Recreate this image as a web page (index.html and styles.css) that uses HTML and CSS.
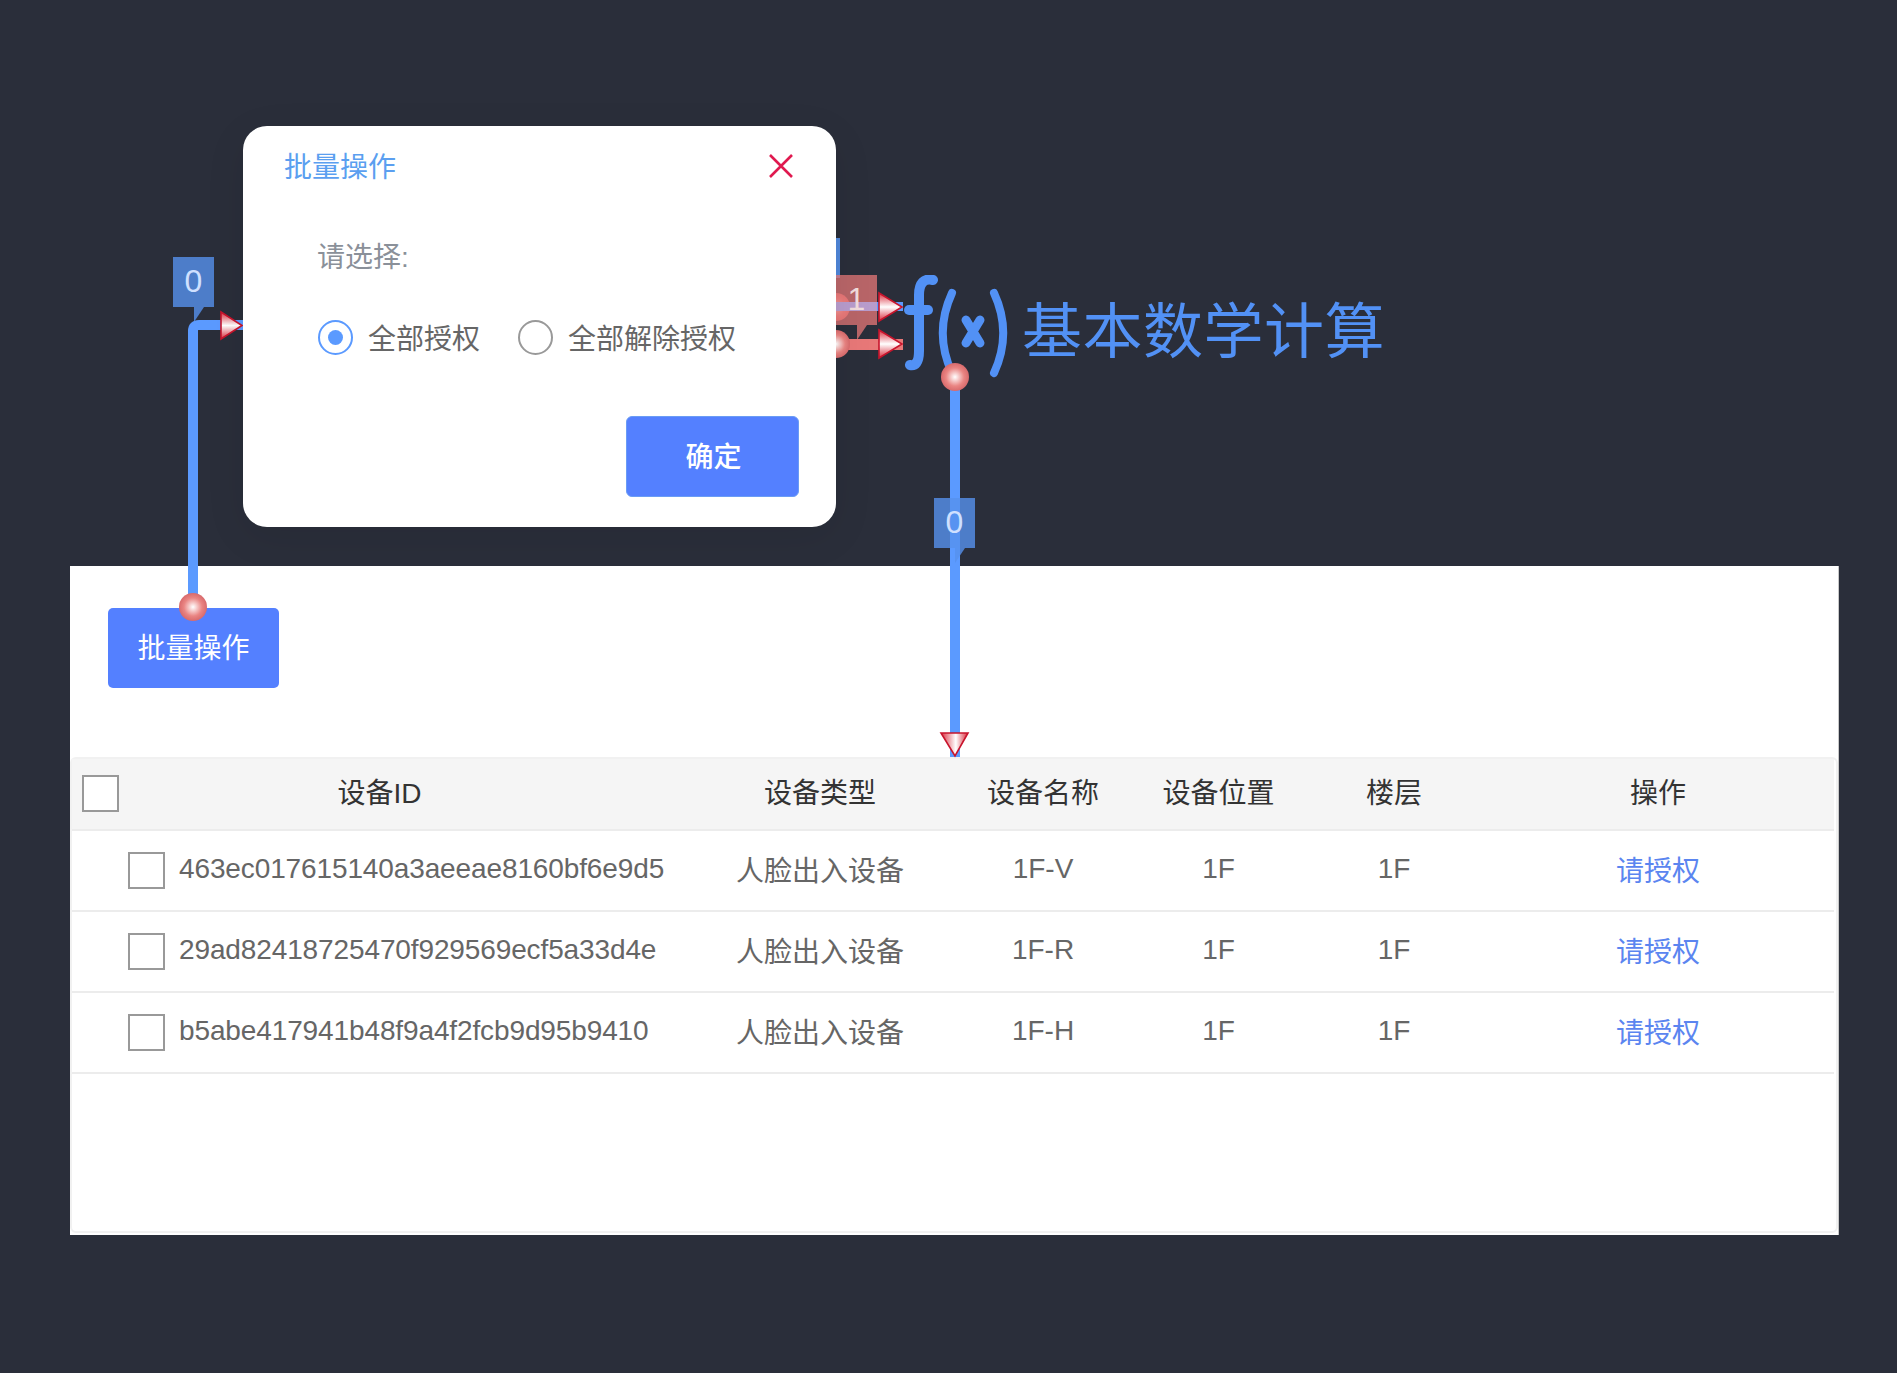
FILE: index.html
```html
<!DOCTYPE html>
<html lang="zh">
<head>
    <meta charset="UTF-8">
    <title>基本数学计算</title>
    <link rel="stylesheet" href="styles.css">
</head>
<body>
    <div class="page">
        <div class="top">
            <section class="dialog">
                <div class="dialog-head">
                    <span class="dialog-title">批量操作</span>
                    <svg class="close" width="28" height="28" viewBox="0 0 28 28"><path d="M3 3 L25 25 M25 3 L3 25" fill="none" stroke="#e0194f" stroke-width="2.6"/></svg>
                </div>
                <p class="dialog-label">请选择:</p>
                <div class="radios">
                    <span class="radio on"></span><span class="radio-text">全部授权</span>
                    <span class="radio"></span><span class="radio-text">全部解除授权</span>
                </div>
                <div class="dialog-foot"><button class="btn btn-ok">确定</button></div>
            </section>
            <div class="heading">
                <svg class="fx" width="112" height="105" viewBox="0 0 112 105">
                    <g fill="none" stroke="#5291f5" stroke-linecap="round">
                        <path d="M33 5 C24 3 19 8 19 20 L19 76 C19 88 15 91 10 90" stroke-width="10"/>
                        <path d="M9 35 L28 35" stroke-width="10"/>
                        <path d="M52 18 C40 44 40 72 52 98" stroke-width="8"/>
                        <path d="M66 45 L80 68 M80 45 L66 68" stroke-width="9"/>
                        <path d="M94 18 C106 44 106 72 94 98" stroke-width="8"/>
                    </g>
                </svg>
                <span class="heading-text">基本数学计算</span>
            </div>
        </div>

        <section class="panel">
            <button class="btn btn-batch">批量操作</button>
            <div class="table">
                <div class="row row-head">
                    <div class="cell cell-id"><span class="check"></span><span class="id-title">设备ID</span></div>
                    <div class="cell">设备类型</div>
                    <div class="cell">设备名称</div>
                    <div class="cell">设备位置</div>
                    <div class="cell">楼层</div>
                    <div class="cell">操作</div>
                </div>
                <div class="row">
                    <div class="cell cell-dev"><span class="check"></span><span>463ec017615140a3aeeae8160bf6e9d5</span></div>
                    <div class="cell">人脸出入设备</div>
                    <div class="cell">1F-V</div>
                    <div class="cell">1F</div>
                    <div class="cell">1F</div>
                    <div class="cell"><a class="link">请授权</a></div>
                </div>
                <div class="row">
                    <div class="cell cell-dev"><span class="check"></span><span>29ad82418725470f929569ecf5a33d4e</span></div>
                    <div class="cell">人脸出入设备</div>
                    <div class="cell">1F-R</div>
                    <div class="cell">1F</div>
                    <div class="cell">1F</div>
                    <div class="cell"><a class="link">请授权</a></div>
                </div>
                <div class="row">
                    <div class="cell cell-dev"><span class="check"></span><span>b5abe417941b48f9a4f2fcb9d95b9410</span></div>
                    <div class="cell">人脸出入设备</div>
                    <div class="cell">1F-H</div>
                    <div class="cell">1F</div>
                    <div class="cell">1F</div>
                    <div class="cell"><a class="link">请授权</a></div>
                </div>
            </div>
        </section>

        <!-- conexiones dibujadas encima de la pagina -->
        <svg class="wires" width="1897" height="1373" viewBox="0 0 1897 1373">
            <defs>
                <radialGradient id="ball">
                    <stop offset="0" stop-color="#ffffff"/>
                    <stop offset=".65" stop-color="#ea8583"/>
                    <stop offset="1" stop-color="#d86a6c"/>
                </radialGradient>
                <linearGradient id="arrowH" x1="0" y1="0" x2="0" y2="1">
                    <stop offset=".08" stop-color="#e04f5c"/>
                    <stop offset=".5" stop-color="#ffffff"/>
                    <stop offset=".92" stop-color="#e04f5c"/>
                </linearGradient>
                <linearGradient id="arrowV" x1="0" y1="0" x2="1" y2="0">
                    <stop offset=".08" stop-color="#e04f5c"/>
                    <stop offset=".55" stop-color="#ffffff"/>
                    <stop offset=".92" stop-color="#e04f5c"/>
                </linearGradient>
            </defs>

            <rect x="836" y="238" width="4" height="40" fill="#4f86d8"/>

            <path d="M193 607 L193 331 Q193 325 199 325 L243 325" fill="none" stroke="#5b9aff" stroke-width="10"/>
            <path d="M955 377 L955 757" fill="none" stroke="#5b9aff" stroke-width="10"/>
            <rect x="836" y="302" width="67" height="9" fill="#5b9aff"/>
            <rect x="836" y="339" width="67" height="11" fill="#e87878"/>

            <circle cx="193" cy="607" r="14" fill="url(#ball)"/>
            <circle cx="955" cy="377" r="14" fill="url(#ball)"/>
            <circle cx="836" cy="307" r="14" fill="url(#ball)"/>
            <circle cx="836" cy="344" r="14" fill="url(#ball)"/>

            <path d="M221 312 L242 325.500 L221 339 Z" fill="url(#arrowH)" stroke="#c8142c" stroke-width="1.6"/>
            <path d="M879 293 L902 307 L879 321 Z" fill="url(#arrowH)" stroke="#c8142c" stroke-width="1.6"/>
            <path d="M879 330 L902 344 L879 358 Z" fill="url(#arrowH)" stroke="#c8142c" stroke-width="1.6"/>
            <path d="M941 733 L968 733 L955 756 Z" fill="url(#arrowV)" stroke="#c8142c" stroke-width="1.6"/>
        </svg>

        <div class="tag tag-blue tag-left">0</div>
        <div class="tag tag-blue tag-mid">0</div>
        <div class="tag tag-red">1</div>
    </div>
</body>
</html>
```

FILE: styles.css
```css
@charset "utf-8";

* { box-sizing: border-box; margin: 0; padding: 0; }

body {
    background: #2a2e3a;
    font-family: "Liberation Sans", "Noto Sans CJK SC", sans-serif;
    font-size: 28px;
    color: #666;
}

.page {
    position: relative;
    width: 1897px;
    height: 1373px;
    padding: 126px 58px 0 70px;
    overflow: hidden;
}

.top {
    display: flex;
    align-items: flex-start;
    padding-left: 173px;
}

/* dialogo */
.dialog {
    position: relative;
    z-index: 2;
    width: 593px;
    height: 401px;
    padding: 19px 37px 29px 41px;
    background: #fff;
    border-radius: 24px;
    box-shadow: 0 10px 40px rgba(0, 0, 0, .08);
}

.dialog-head {
    display: flex;
    justify-content: space-between;
    align-items: center;
    height: 40px;
}

.dialog-title { color: #5b9ff0; }

.close { margin: 2px 4px 0 0; }

.dialog-label {
    margin: 53px 0 0 33px;
    line-height: 40px;
    color: #8a9099;
}

.radios {
    display: flex;
    align-items: center;
    height: 40px;
    margin: 39px 0 0 34px;
}

.radio {
    display: flex;
    align-items: center;
    justify-content: center;
    width: 35px;
    height: 35px;
    border: 2px solid #999;
    border-radius: 50%;
}

.radio.on { border-color: #5b9aff; }

.radio.on::after {
    content: "";
    width: 15px;
    height: 15px;
    border-radius: 50%;
    background: #5b9aff;
}

.radio-text { margin: 0 38px 0 15px; }

.dialog-foot {
    display: flex;
    justify-content: flex-end;
    margin-top: 59px;
}

.btn {
    padding-bottom: 4px;
    color: #fff;
    font: inherit;
    background: #5480ff;
    border: 0;
    border-radius: 5px;
}

.btn-ok {
    width: 173px;
    height: 81px;
    padding-left: 2px;
    font-weight: 500;
    border: 1px solid #6a9cf5;
    border-radius: 6px;
}

/* titulo */
.heading {
    display: flex;
    align-items: center;
    gap: 10px;
    margin: 149px 0 0 64px;
}

.heading-text {
    margin-top: 11px;
    font-size: 60px;
    line-height: 60px;
    letter-spacing: .5px;
    color: #5291f5;
}

/* tabla */
.panel {
    width: 1769px;
    height: 669px;
    margin-top: 39px;
    padding-top: 42px;
    background: #fff;
    border-right: 1px solid #c8c8c8;
}

.btn-batch {
    display: block;
    width: 171px;
    height: 80px;
    margin-left: 38px;
}

.table {
    height: 476px;
    margin-top: 69px;
    padding-right: 2px;
    border: 2px solid #f1f1f1;
    border-radius: 6px;
}

.row {
    display: grid;
    grid-template-columns: 613px 270px 176px 175px 176px 352px;
    height: 81px;
    border-bottom: 2px solid #ececec;
}

.row-head {
    height: 72px;
    color: #333;
    background: #f5f5f5;
}

.cell {
    display: flex;
    align-items: center;
    justify-content: center;
    padding-bottom: 4px;
}

.row-head .cell { padding-bottom: 6px; }

.cell-id { padding-left: 10px; }

.id-title {
    flex: 1;
    margin-right: 45px;
    text-align: center;
}

.cell-dev {
    justify-content: flex-start;
    gap: 14px;
    padding-left: 56px;
    letter-spacing: -.12px;
}

.check {
    flex: none;
    width: 37px;
    height: 37px;
    margin-bottom: -4px;
    background: #fff;
    border: 2px solid #999;
}

.link { color: #5b85f0; }

/* etiquetas de las conexiones */
.tag {
    position: absolute;
    z-index: 1;
    display: flex;
    align-items: center;
    justify-content: center;
    width: 41px;
    height: 50px;
    padding-bottom: 2px;
    font-size: 32px;
}

.tag::after {
    content: "";
    position: absolute;
    top: 100%;
    left: 21px;
    width: 0;
    height: 0;
    border-top: 15px solid transparent;
    border-right: 10px solid transparent;
    border-left: 0 solid transparent;
}

.tag-blue {
    color: #cfe0ff;
    background: rgba(86, 145, 238, .8);
}

.tag-blue::after { border-top-color: rgba(86, 145, 238, .8); }

.tag-red {
    top: 275px;
    left: 836px;
    color: #f0dcdc;
    background: rgba(232, 120, 120, .75);
}

.tag-red::after { border-top-color: rgba(232, 120, 120, .75); }

.tag-red::before {
    content: "";
    position: absolute;
    top: 27px;
    left: 0;
    z-index: -1;
    width: 41px;
    height: 9px;
    background: #b89ccc;
}

.tag-left { top: 257px; left: 173px; }

.tag-mid { top: 498px; left: 934px; }

.wires {
    position: absolute;
    top: 0;
    left: 0;
    z-index: 1;
}
```
